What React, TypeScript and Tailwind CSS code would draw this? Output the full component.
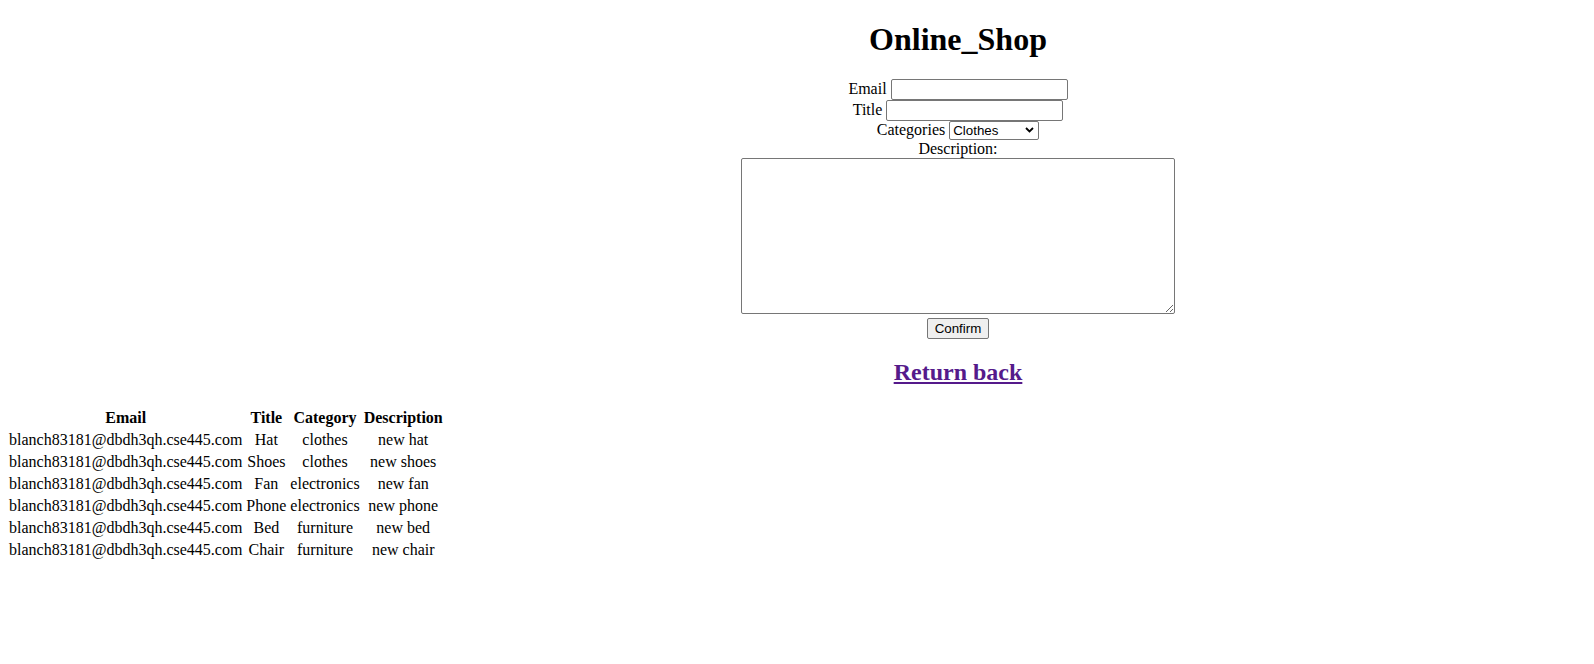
import React from "react";

const rows = [
  ["blanch83181@dbdh3qh.cse445.com", "Hat", "clothes", "new hat"],
  ["blanch83181@dbdh3qh.cse445.com", "Shoes", "clothes", "new shoes"],
  ["blanch83181@dbdh3qh.cse445.com", "Fan", "electronics", "new fan"],
  ["blanch83181@dbdh3qh.cse445.com", "Phone", "electronics", "new phone"],
  ["blanch83181@dbdh3qh.cse445.com", "Bed", "furniture", "new bed"],
  ["blanch83181@dbdh3qh.cse445.com", "Chair", "furniture", "new chair"],
];

export default function App() {
  return (
    <div className="min-h-[664px] w-full bg-white px-[8px] pt-[21px] font-['Liberation_Serif','Times_New_Roman',serif] text-[16px] leading-[normal] text-black">
      <div className="ml-[322px] text-center">
        <h1 className="text-[32px] font-bold leading-[normal]">Online_Shop</h1>
        <form className="mt-[21px]" onSubmit={(e) => e.preventDefault()}>
          <div>
            Email{" "}
            <input
              type="text"
              className="h-[21px] w-[177px] rounded-[2px] border border-[#767676] bg-white px-[2px] py-[1px] align-baseline font-['Liberation_Sans',Arial,sans-serif] text-[13.33px]"
            />
          </div>
          <div>
            Title{" "}
            <input
              type="text"
              className="h-[21px] w-[177px] rounded-[2px] border border-[#767676] bg-white px-[2px] py-[1px] align-baseline font-['Liberation_Sans',Arial,sans-serif] text-[13.33px]"
            />
          </div>
          <div>
            Categories{" "}
            <span className="relative inline-block align-baseline">
              <select
                defaultValue="Clothes"
                className="h-[19px] w-[90px] appearance-none rounded-[2px] border border-[#767676] bg-white pl-[3px] pr-[16px] align-baseline font-['Liberation_Sans',Arial,sans-serif] text-[13.33px] leading-[15px] text-black"
              >
                <option>Clothes</option>
                <option>Electronics</option>
                <option>Furniture</option>
              </select>
              <svg
                className="pointer-events-none absolute right-[5px] top-[6px]"
                width="9"
                height="6"
                viewBox="0 0 9 6"
              >
                <path d="M1 1 L4.5 4.5 L8 1" fill="none" stroke="#000" strokeWidth="1.8" />
              </svg>
            </span>
          </div>
          <div>Description:</div>
          <textarea className="mx-auto block h-[156px] w-[434px] resize rounded-[2px] border border-[#767676] bg-white p-[2px] font-['Liberation_Mono',monospace] text-[13.33px]" />
          <div className="mt-[4px]">
            <button
              type="submit"
              className="h-[21px] w-[62px] rounded-[2px] border border-[#767676] bg-[#efefef] px-[6px] font-['Liberation_Sans',Arial,sans-serif] text-[13.33px] leading-[15px] text-black"
            >
              Confirm
            </button>
          </div>
        </form>
        <h2 className="mt-[20px] text-[24px] font-bold leading-[normal]">
          <a href="#" className="text-[#551a8b] underline">
            Return back
          </a>
        </h2>
      </div>
      <table className="-ml-[2px] mt-[20px] border-separate border-spacing-[2px]">
        <thead>
          <tr>
            <th className="p-[1px] text-center font-bold">Email</th>
            <th className="p-[1px] text-center font-bold">Title</th>
            <th className="p-[1px] text-center font-bold">Category</th>
            <th className="p-[1px] text-center font-bold">Description</th>
          </tr>
        </thead>
        <tbody>
          {rows.map((r, i) => (
            <tr key={i}>
              {r.map((c, j) => (
                <td key={j} className="p-[1px] text-center">
                  {c}
                </td>
              ))}
            </tr>
          ))}
        </tbody>
      </table>
    </div>
  );
}
